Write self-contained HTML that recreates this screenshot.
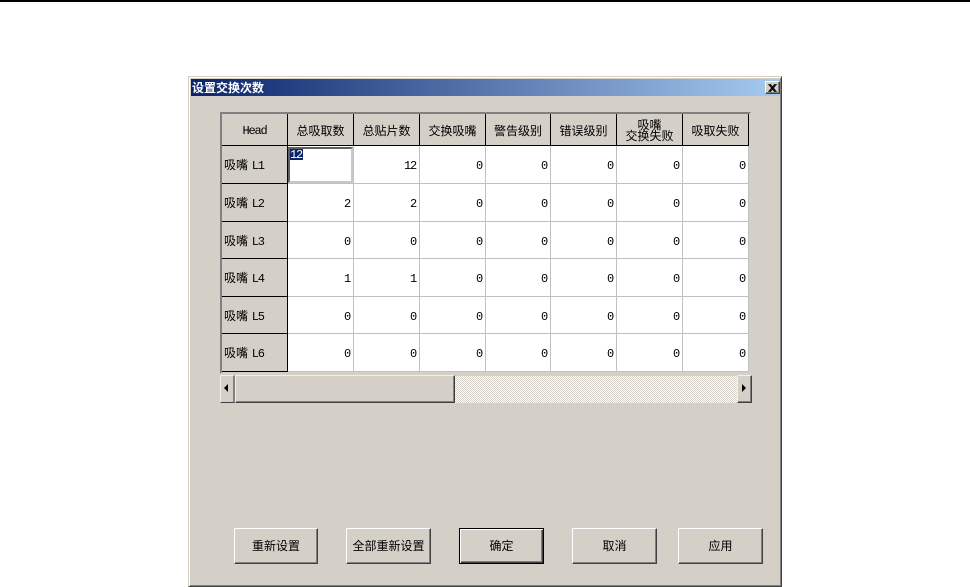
<!DOCTYPE html>
<html lang="zh">
<head>
<meta charset="utf-8">
<title>设置交换次数</title>
<style>
html,body{margin:0;padding:0;width:970px;height:587px;overflow:hidden;background:#fff}
body{position:relative;font:12px/12px "Liberation Mono","WenQuanYi Zen Hei","Noto Sans CJK SC",monospace;color:#000}
div{position:absolute;box-sizing:border-box}
#topline{left:0;top:0;width:970px;height:2px;background:#000}
#dlg{left:188px;top:76px;width:594px;height:511px;background:#d4d0c8;border-left:1px solid #d4d0c8;border-top:1px solid #d4d0c8;border-right:1px solid #404040;border-bottom:1px solid #404040;box-shadow:inset 1px 1px 0 #fff,inset -1px -1px 0 #808080}
#title{left:191px;top:79px;width:589px;height:17px;background:linear-gradient(90deg,#0a246a,#a6caf0);color:#fff;font:bold 12px/17px "WenQuanYi Zen Hei","Noto Sans CJK SC",sans-serif;padding-left:1px;letter-spacing:0}
#close{left:765px;top:81px;width:15px;height:13px;background:#d4d0c8;border:1px solid;border-color:#fff #404040 #404040 #fff;box-shadow:inset -1px -1px 0 #808080}
#close svg{position:absolute;left:2px;top:2px}
#frame{left:220px;top:112px;width:531px;height:262px;background:#fff;border:2px solid;border-color:#808080 #d4d0c8 #d4d0c8 #808080}
table{position:absolute;left:222px;top:114px;border-collapse:separate;border-spacing:0;table-layout:fixed;width:527px}
td,th{padding:0;font-weight:normal;box-sizing:border-box;border-right:1px solid #c0c0c0;border-bottom:1px solid #c0c0c0;font:12px/12px "Liberation Mono","WenQuanYi Zen Hei",monospace;letter-spacing:-1.2px;text-align:right;padding:3px 3px 0 0;background:#fff}
th{background:#d4d0c8;border-color:#000;text-align:center;padding:2px 0 0;letter-spacing:0;font:12px/12px "WenQuanYi Zen Hei","Noto Sans CJK SC",sans-serif}
th.m{font:12px/12px "Liberation Mono",monospace;letter-spacing:-1.2px}
th.r{text-align:left;padding:2px 0 0 2px;font:12px/12px "WenQuanYi Zen Hei","Noto Sans CJK SC",sans-serif}
th.r span{font:12px/12px "Liberation Mono",monospace;letter-spacing:-1.2px;margin-left:1px}
th.two{line-height:11px;padding-top:0}
#edit{left:288px;top:147px;width:65px;height:36px;background:#fff;border:2px solid;border-color:#606060 #c8c8c8 #c8c8c8 #606060}
#sel{left:290px;top:149px;width:13px;height:11px;overflow:hidden;background:#0a246a;color:#fff;font:12px/12px "Liberation Mono",monospace;letter-spacing:-1.2px}
.sb{top:375px;height:28px;background:#d4d0c8;border:1px solid;border-color:#f0f0f0 #404040 #404040 #f0f0f0;box-shadow:inset -1px -1px 0 #808080}
#track{left:455px;top:376px;width:282px;height:27px;background-color:#e6e3dd;background-image:repeating-conic-gradient(#d4d0c8 0 25%,#fff 0 50%);background-size:2px 2px}
.arrow{width:0;height:0;top:8px;border-top:4px solid transparent;border-bottom:4px solid transparent}
.btn{top:528px;height:36px;background:#d4d0c8;border:1px solid;border-color:#fff #404040 #404040 #fff;box-shadow:inset -1px -1px 0 #808080;text-align:center;font:12px/33px "WenQuanYi Zen Hei","Noto Sans CJK SC",sans-serif}
.def{border:1px solid #000;box-shadow:inset 1px 1px 0 #fff,inset -1px -1px 0 #404040,inset -2px -2px 0 #808080}
</style>
</head>
<body>
<div id="topline"></div>
<div id="dlg"></div>
<div id="title">设置交换次数</div>
<div id="close"><svg width="9" height="8" viewBox="0 0 9 8"><path d="M0.5 0L7 8M2 0L8.5 8M7 0L0.5 8M8.5 0L2 8" stroke="#000" stroke-width="1" fill="none"/></svg></div>
<div id="frame"></div>
<table>
<colgroup><col style="width:66px"><col style="width:66px"><col style="width:66px"><col style="width:66px"><col style="width:65px"><col style="width:66px"><col style="width:66px"><col style="width:66px"></colgroup>
<tr style="height:32px"><th class="m">Head</th><th>总吸取数</th><th>总贴片数</th><th>交换吸嘴</th><th>警告级别</th><th>错误级别</th><th class="two">吸嘴<br>交换失败</th><th>吸取失败</th></tr>
<tr style="height:38px"><th class="r">吸嘴 <span>L1</span></th><td></td><td>12</td><td>0</td><td>0</td><td>0</td><td>0</td><td>0</td></tr>
<tr style="height:38px"><th class="r">吸嘴 <span>L2</span></th><td>2</td><td>2</td><td>0</td><td>0</td><td>0</td><td>0</td><td>0</td></tr>
<tr style="height:37px"><th class="r">吸嘴 <span>L3</span></th><td>0</td><td>0</td><td>0</td><td>0</td><td>0</td><td>0</td><td>0</td></tr>
<tr style="height:38px"><th class="r">吸嘴 <span>L4</span></th><td>1</td><td>1</td><td>0</td><td>0</td><td>0</td><td>0</td><td>0</td></tr>
<tr style="height:37px"><th class="r">吸嘴 <span>L5</span></th><td>0</td><td>0</td><td>0</td><td>0</td><td>0</td><td>0</td><td>0</td></tr>
<tr style="height:38px"><th class="r">吸嘴 <span>L6</span></th><td>0</td><td>0</td><td>0</td><td>0</td><td>0</td><td>0</td><td>0</td></tr>
</table>
<div id="edit"></div>
<div id="sel">12</div>
<div id="track"></div>
<div class="sb" style="left:220px;width:15px;border-right:2px solid #808080;border-bottom-color:#404040;box-shadow:none"><div class="arrow" style="left:3px;border-right:4px solid #000"></div></div>
<div class="sb" style="left:235px;width:220px"></div>
<div class="sb" style="left:737px;width:15px"><div class="arrow" style="left:4px;border-left:4px solid #000"></div></div>
<div class="btn" style="left:234px;width:84px">重新设置</div>
<div class="btn" style="left:346px;width:85px">全部重新设置</div>
<div class="btn def" style="left:459px;width:85px">确定</div>
<div class="btn" style="left:572px;width:85px">取消</div>
<div class="btn" style="left:678px;width:85px">应用</div>
</body>
</html>
